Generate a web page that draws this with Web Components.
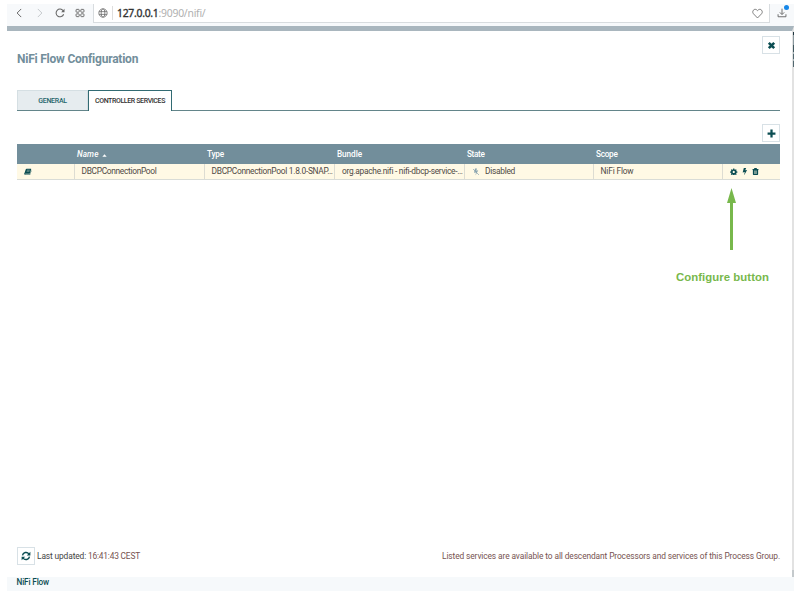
<!DOCTYPE html>
<html lang="en"><head><meta charset="utf-8"><title>NiFi Flow Configuration</title>
<style>
html,body{margin:0;background:#fff;overflow:hidden}
body{width:800px;height:596px;font-family:Roboto,"Liberation Sans",sans-serif;font-size:8.4px;color:#4f4a45}
</style></head><body>
<nifi-app></nifi-app>
<script>
const define=(name,html,after)=>customElements.define(name,class extends HTMLElement{
  connectedCallback(){
    if(this.shadowRoot)return;
    const t=document.createElement('template');t.innerHTML=html;
    this.attachShadow({mode:'open'}).append(t.content.cloneNode(true));
    if(after)after(this);
  }
});

/* Single line of text, tracked so that it spans the width given in "w". */
define('text-run','<style>:host{display:inline-block;white-space:pre;line-height:1.2;flex:none}span{display:inline-block}</style><span><slot></slot></span>',el=>{
  const w=+el.getAttribute('w'),s=el.shadowRoot.querySelector('span');
  const n=el.textContent.length,now=s.getBoundingClientRect().width;
  if(w&&now)s.style.letterSpacing=((w-now)/n).toFixed(3)+'px';
});

const glyphs={
  back:'<path d="M11.500 1.500 5 8l6.500 6.500" fill="none" stroke="currentColor" stroke-width="1.6"/>',
  forward:'<path d="M4.500 1.500 11 8l-6.500 6.500" fill="none" stroke="currentColor" stroke-width="1.6"/>',
  reload:'<path d="M13.800 10A6.200 6.200 0 1 1 13 4.300" fill="none" stroke="currentColor" stroke-width="1.700"/><path d="M15.200 1v5.600H9.800z" fill="currentColor"/>',
  dial:'<g fill="none" stroke="currentColor" stroke-width="1.500"><rect x="1.700" y="2.200" width="5" height="4.500" rx="1"/><rect x="9.300" y="2.200" width="5" height="4.500" rx="1"/><rect x="1.700" y="9.300" width="5" height="4.500" rx="1"/><rect x="9.300" y="9.300" width="5" height="4.500" rx="1"/></g>',
  globe:'<g fill="none" stroke="currentColor" stroke-width="1.2"><circle cx="8" cy="8" r="6.7"/><ellipse cx="8" cy="8" rx="3" ry="6.7"/><path d="M1.600 5.800h12.800M1.600 10.200h12.800"/></g>',
  heart:'<path d="M8 14.500 2 8.300C-1 4.500 4-1 8 3.800 12-1 17 4.500 14 8.300z" fill="none" stroke="currentColor" stroke-width="1.2"/>',
  download:'<path d="M8 1v9M4.500 7 8 10.500 11.500 7M1.700 10v4h12.600v-4" fill="none" stroke="currentColor" stroke-width="1.500"/>',
  close:'<path d="M3.200 3.200l9.600 9.600M12.800 3.200 3.200 12.800" stroke="currentColor" stroke-width="4.600" fill="none"/>',
  plus:'<path d="M8 1v14M1 8h14" stroke="currentColor" stroke-width="4" fill="none"/>',
  refresh:'<g fill="none" stroke="currentColor" stroke-width="2.300"><path d="M2.400 7A5.700 5.700 0 0 1 12.600 4.600"/><path d="M13.600 9A5.700 5.700 0 0 1 3.400 11.400"/></g><path d="M15 1.200V7H9.200zM1 14.800V9h5.800z" fill="currentColor"/>',
  book:'<path d="M5.500 1.500h9.300q.9.200.6 1.200L12.800 11q-.5 1.300-1.800 1.300H3q-1 0-.9.700.2.700 1 .7h8.700q.9 0 1.200-.9L15.600 5q.6.600.2 1.600l-2.500 7.200q-.5 1.200-1.800 1.200H2.800Q.6 14.500.5 12.300.5 11 1.300 10L3.600 3Q4.200 1.500 5.500 1.500z" fill="currentColor"/><path d="M6.300 4.500h6M5.600 7h6" stroke="#fff9e5" stroke-width=".8"/>',
  gear:'<path d="M6.800 1h2.400l.4 2 1.300.5 1.700-1.100 1.700 1.700-1.100 1.700.5 1.300 2 .4v2.400l-2 .4-.5 1.300 1.100 1.700-1.700 1.700-1.700-1.100-1.300.5-.4 2H6.800l-.4-2-1.300-.5-1.700 1.100-1.700-1.700 1.100-1.700-.5-1.300-2-.4V7.500l2-.4.5-1.300-1.100-1.700 1.700-1.700 1.700 1.100 1.300-.5zM8 6a2.400 2.400 0 1 0 .01 0z" fill="currentColor" fill-rule="evenodd"/>',
  bolt:'<path d="M6 0h5L9 5l4-1L6.500 16 8 8.300 3.500 9.500z" fill="currentColor"/>',
  boltoff:'<path d="M6 1h4L8.500 5.500l4-1L7 15 8 8.800 4 9.500z" fill="currentColor"/><path d="M2 2l12 12" stroke="currentColor" stroke-width="1.400"/>',
  trash:'<path d="M5.500 0h5l1 2H15v2h-1v10.500q0 1.500-1.500 1.500h-9Q2 16 2 14.500V4H1V2h3.500zM4.600 5.500v8h1v-8zm2.900 0v8h1v-8zm2.900 0v8h1v-8z" fill="currentColor" fill-rule="evenodd"/>',
  sort:'<path d="M1 12h14L8 4z" fill="currentColor"/>',
  arrow:'<path d="M4.500 0 9 15H6V62H3V15H0z" fill="#78b84c"/>'
};
define('ui-icon','<style>:host{display:inline-flex;flex:none}svg{display:block}</style><svg></svg>',el=>{
  const svg=el.shadowRoot.querySelector('svg'),s=el.getAttribute('size')||10;
  svg.setAttribute('viewBox',el.getAttribute('box')||'0 0 16 16');
  svg.setAttribute('width',s);svg.setAttribute('height',el.getAttribute('high')||s);
  svg.innerHTML=glyphs[el.getAttribute('name')];
});
define('icon-button','<style>:host{display:flex;box-sizing:border-box;width:18px;height:18px;border:1px solid #d8e1e6;align-items:center;justify-content:center;color:#0b4d52;flex:none}</style><slot></slot>');

define('browser-bar',`<style>
:host{display:flex;height:22px;margin-top:4px;background:#f7f9fb;color:#666;box-sizing:border-box}
.nav{width:86px;display:grid;grid-template-columns:24px 18px 22px 18px;align-items:center;justify-items:center;padding-bottom:4px;box-sizing:border-box}
.address{flex:1;display:flex;align-items:center;background:#fff;border:1px solid #d8dcdf;border-width:0 1px 1px;height:19px;box-sizing:border-box}
.divide{width:1px;height:14px;background:#dedede;margin:0 4px 0 4px}
text-run{font:10.400px "Noto Sans","DejaVu Sans",sans-serif;color:#333;-webkit-text-stroke:.35px #333}
.path{color:#b0b0b0;-webkit-text-stroke:0}.fav{margin-left:auto;margin-right:6px}.off{color:#c5c9cc}
.down{width:24px;position:relative;display:flex;justify-content:center;padding-top:4px;box-sizing:border-box}
i{position:absolute;width:5px;height:5px;border-radius:50%;background:#1687e8;right:5px;top:1px}
</style><div class="nav"><ui-icon name="back" size="10"></ui-icon><ui-icon class="off" name="forward" size="10"></ui-icon><ui-icon name="reload" size="10"></ui-icon><ui-icon name="dial" size="10"></ui-icon></div>
<div class="address"><ui-icon name="globe" size="10" style="margin-left:4px"></ui-icon><span class="divide"></span><text-run w="41.500">127.0.0.1</text-run><text-run class="path" w="47">:9090/nifi/</text-run><ui-icon class="fav" name="heart" size="11"></ui-icon></div>
<div class="down"><ui-icon name="download" size="10" style="margin-left:-1px"></ui-icon><i></i></div>`);

define('tab-strip',`<style>
:host{display:flex;height:21px;border-bottom:1px solid #63858a;box-sizing:border-box;font-size:7px;font-weight:500}
div{box-sizing:border-box;display:flex;justify-content:center;align-items:center;height:20px;padding-top:1px}
.g{width:71px;background:#e6ecef;color:#24656b;border:1px solid #d5dfe3;border-bottom:0}
.c{width:84px;height:21px;background:#fff;border:1px solid #326b73;border-bottom:0;color:#333;padding-top:0}
</style><div class="g"><text-run w="28.500">GENERAL</text-run></div><div class="c"><text-run w="70">CONTROLLER SERVICES</text-run></div>`);

define('service-table',`<style>
:host{display:block}
.row{display:grid;grid-template-columns:58px 130px 130px 130px 129px 129px 57px}
.head{height:20px;background:#728e9b;color:#fff;font-weight:500;font-size:8.200px}
.head div{display:flex;align-items:center;padding:2px 0 0 2px}
.body{height:16px;background:#fff9e5;border-bottom:1px solid #d9dcd7;box-sizing:border-box}
.body div{border-right:1px solid #dddcd2;display:flex;align-items:center;padding-left:7px;box-sizing:border-box;min-width:0}
.body div:last-child{border:0}ui-icon{color:#0b4d52}
.head ui-icon{color:#fff;margin-left:3px}
</style><div class="row head"><div></div><div><text-run style="font-style:italic" w="21.500">Name</text-run><ui-icon name="sort" size="5"></ui-icon></div><div><text-run w="17">Type</text-run></div><div><text-run w="25">Bundle</text-run></div><div style="padding-left:2px"><text-run w="17.500">State</text-run></div><div><text-run w="21.500">Scope</text-run></div><div></div></div>
<div class="row body"><div style="padding-left:7px"><ui-icon name="book" size="7.500"></ui-icon></div><div style="padding-left:6.500px"><text-run w="75">DBCPConnectionPool</text-run></div><div style="padding-left:6.500px"><text-run w="121">DBCPConnectionPool 1.8.0-SNAP…</text-run></div><div><text-run w="120">org.apache.nifi - nifi-dbcp-service-…</text-run></div><div><ui-icon name="boltoff" size="8" style="color:#8ba5b0;margin-right:5px"></ui-icon><text-run w="30">Disabled</text-run></div><div style="padding-left:6.500px"><text-run w="33">NiFi Flow</text-run></div><div style="padding-left:7px"><ui-icon name="gear" size="7.500"></ui-icon><ui-icon name="bolt" size="7.500" style="margin:0 3.500px"></ui-icon><ui-icon name="trash" size="7"></ui-icon></div></div>`);

define('flow-dialog',`<style>
:host{display:flex;flex-direction:column;height:546px;border-top:5px solid #a9b6be;border-right:2px solid #e2e2e2;box-sizing:content-box;padding:0 12px 0 10px;background:#fff;width:763px}
.title{height:59px;display:flex;justify-content:space-between}
.title text-run{font-size:12px;font-weight:700;color:#728e9b;margin-top:21px}
.tools{display:flex;justify-content:flex-end;margin-top:13px;height:20px}
.foot{margin-top:auto;margin-bottom:12px;display:flex;align-items:center;color:#775351}
.note{margin-left:auto}
</style><div class="title"><text-run w="121">NiFi Flow Configuration</text-run><icon-button style="margin-top:5px"><ui-icon name="close" size="9"></ui-icon></icon-button></div>
<tab-strip></tab-strip><div class="tools"><icon-button><ui-icon name="plus" size="9"></ui-icon></icon-button></div><service-table></service-table>
<div class="foot"><icon-button><ui-icon name="refresh" size="10"></ui-icon></icon-button><text-run w="51" style="color:#444;margin-left:2px">Last updated: </text-run><text-run w="52">16:41:43 CEST</text-run><text-run class="note" w="338">Listed services are available to all descendant Processors and services of this Process Group.</text-run></div>`);

define('call-out',`<style>:host{position:absolute;left:676px;top:188px;width:93px;display:flex;flex-direction:column;color:#78b84c}
ui-icon{margin-left:51px}text-run{font:bold 11.400px "Liberation Sans",sans-serif;margin-top:21px}</style><ui-icon name="arrow" size="9" high="62" box="0 0 9 62"></ui-icon><text-run w="93">Configure button</text-run>`);

define('nifi-app',`<style>:host{display:block;padding-left:7px;width:787px}
.crumb{height:14px;background:#f6f9fb;color:#0b4d52;font-weight:500;display:flex;align-items:center;padding:0 0 2px 9.500px;box-sizing:border-box;font-size:8.200px}
.marks{position:absolute;left:793px;top:32px;width:1px;height:35px;background:linear-gradient(#20363e 0 3px,#8a989e 3px 13px,#40575f 13px 20px,#a9b5b9 20px 22px,#526870 22px 27px,#a9b5b9 27px 29px,#526870 29px)}
.end{position:absolute;left:792px;top:570px;width:2px;height:7px;background:#c4c9cc}
</style><browser-bar></browser-bar><flow-dialog></flow-dialog><div class="crumb"><text-run w="32.500">NiFi Flow</text-run></div><div class="marks"></div><div class="end"></div><call-out></call-out>`);
</script></body></html>
